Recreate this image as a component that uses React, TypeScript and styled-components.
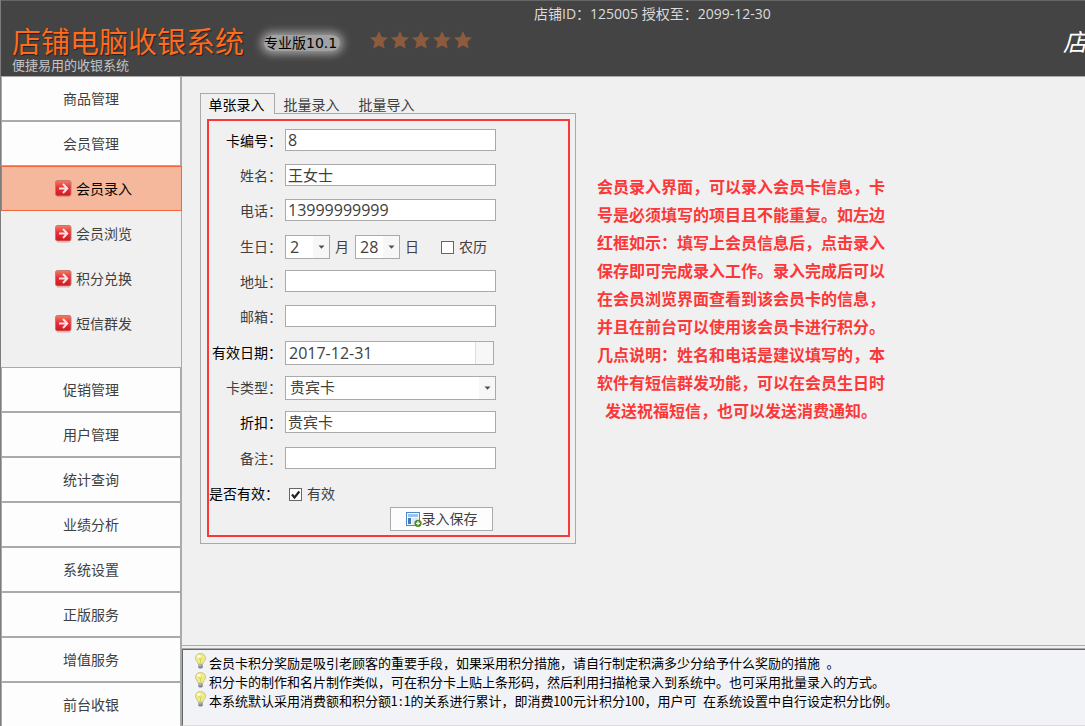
import React, { useState } from 'react';
import styled, { createGlobalStyle } from 'styled-components';

const CJK = '"Noto Sans CJK SC", sans-serif';
const MIXED = '"Open Sans", "Noto Sans CJK SC", sans-serif';

const GlobalStyle = createGlobalStyle`
  *, *::before, *::after { box-sizing: border-box; }
  body { margin: 0; background: #f0f0f0; font: 14px/20px ${CJK}; color: #404040; }
  button, input, select { font: inherit; color: inherit; margin: 0; border-radius: 0; }
`;

const Page = styled.div`
  display: flex;
  flex-direction: column;
  height: 100vh;
  overflow: hidden;
  border-left: 1px solid #7c7c7c;
`;

const Header = styled.header`
  display: flex;
  flex: none;
  align-items: flex-start;
  height: 76px;
  padding-left: 11px;
  overflow: hidden;
  background: #444;
  border-top: 1px solid #666;
  white-space: nowrap;
`;

const Brand = styled.div`
  flex: none;
  width: 252px;
  padding-top: 22px;
`;

const Title = styled.h1`
  margin: 0;
  font-size: 29px;
  font-weight: 400;
  line-height: 34px;
  color: #ff6a1c;
  text-shadow: 1px 1px 1px #222;
`;

const Slogan = styled.p`
  margin: 0;
  font-size: 13px;
  line-height: 16px;
  color: #c4c4c4;
`;

const Edition = styled.span`
  flex: none;
  width: 76px;
  margin-top: 34px;
  font: 14px/16px "DejaVu Sans", ${CJK};
  color: #000;
  background: rgba(255, 255, 255, 0.5);
  border-radius: 8px;
  box-shadow: 0 0 8px 3px rgba(255, 255, 255, 0.5);
`;

const Stars = styled.div`
  display: flex;
  flex: none;
  gap: 3px;
  margin: 30px 0 0 30px;
`;

const License = styled.p`
  flex: none;
  margin: 3px 0 0 62px;
  font-family: ${MIXED};
  color: #dcdcdc;
`;

const ShopName = styled.em`
  flex: none;
  width: 22px;
  margin: 25px 0 0 auto;
  font-size: 24px;
  line-height: 30px;
  color: #fff;
`;

const Body = styled.div`
  display: flex;
  flex: 1;
  min-height: 0;
`;

const Sidebar = styled.nav`
  flex: none;
  width: 181px;
  border-right: 1px solid #aaa;
`;

const MenuItem = styled.a`
  display: flex;
  align-items: center;
  justify-content: center;
  height: 45px;
  padding-bottom: 2px;
  border: 1px solid #aaa;
  background: #fdfdfd;
  color: #404040;
  text-decoration: none;
`;

const SubMenu = styled.div`
  padding-bottom: 21px;
`;

const SubItem = styled.a<{ $active?: boolean }>`
  display: flex;
  align-items: center;
  gap: 4px;
  height: 45px;
  margin-right: ${p => (p.$active ? '-1px' : '0')};
  padding: 0 0 1px 53px;
  border: 1px solid ${p => (p.$active ? '#f2663c' : 'transparent')};
  background: ${p => (p.$active ? '#f5b89c' : 'transparent')};
  color: ${p => (p.$active ? '#000' : '#404040')};
  text-decoration: none;
`;

const Content = styled.div`
  display: flex;
  flex: 1;
  flex-direction: column;
  min-width: 0;
  border-top: 1px solid #aaa;
`;

const Workspace = styled.main`
  display: flex;
  flex: 1;
  gap: 21px;
  align-items: flex-start;
  padding: 16px 18px 0;
`;

const TabBar = styled.div`
  display: flex;
  height: 21px;
`;

const Tab = styled.button<{ $active?: boolean }>`
  z-index: ${p => (p.$active ? 1 : 0)};
  height: 21px;
  width: 75px;
  padding: 0 2px 0 0;
  line-height: 18px;
  border: 1px solid ${p => (p.$active ? '#aaa' : 'transparent')};
  border-bottom: 0;
  background: ${p => (p.$active ? '#f0f0f0' : 'none')};
  color: ${p => (p.$active ? '#000' : '#404040')};
`;

const TabPanel = styled.div`
  margin-top: -1px;
  padding: 5px 5px 6px 6px;
  border: 1px solid #aaa;
`;

const TabSheet = styled.section`
  flex: none;
  width: 376px;
`;

const EntryForm = styled.form`
  display: flex;
  flex-direction: column;
  gap: 1px;
  padding: 8px 0 4px;
  border: 2px solid #fb3838;
`;

const Group = styled.div`
  display: flex;
  flex-direction: column;
`;

const Row = styled.div<{ $last?: boolean }>`
  display: flex;
  align-items: flex-start;
  height: ${p => (p.$last ? '25px' : '35px')};
`;

const Label = styled.label<{ $strong?: boolean; $spaced?: boolean }>`
  flex: none;
  width: 76px;
  padding-right: ${p => (p.$spaced ? '6px' : '3px')};
  line-height: 22px;
  text-align: right;
  white-space: nowrap;
  color: ${p => (p.$strong ? '#000' : '#404040')};
`;

const TextInput = styled.input<{ $numeric?: boolean }>`
  width: 211px;
  height: 22px;
  padding: ${p => (p.$numeric ? '0 2px' : '0 2px 2px')};
  border: 1px solid #aaa;
  background: #fff;
  font-family: ${MIXED};
  font-size: ${p => (p.$numeric ? '16px' : '15px')};
`;

const SelectBox = styled.span<{ $wide?: boolean }>`
  display: grid;
  width: ${p => (p.$wide ? '211px' : '45px')};
  height: 24px;

  select, svg { grid-area: 1 / 1; }
  svg { justify-self: end; align-self: center; margin-right: 5px; pointer-events: none; }
`;

const Select = styled.select<{ $numeric?: boolean }>`
  appearance: none;
  width: 100%;
  height: 24px;
  padding: ${p => (p.$numeric ? '0 0 0 4px' : '0 0 2px 4px')};
  border: 1px solid #aaa;
  background: linear-gradient(to left, #f7f7f7 16px, #fff 16px);
  font-family: ${MIXED};
  font-size: ${p => (p.$numeric ? '16px' : '15px')};
`;

const Unit = styled.span`
  width: 25px;
  padding-left: 5px;
  line-height: 22px;
`;

const CheckLabel = styled.label<{ $indent?: boolean }>`
  display: flex;
  align-items: center;
  gap: 5px;
  height: 24px;
  margin-left: ${p => (p.$indent ? '16px' : '4px')};
  line-height: 22px;
`;

const CheckText = styled.span`
  padding-bottom: 2px;
`;

const CheckBox = styled.span`
  display: grid;
  width: 13px;
  height: 13px;

  input, svg { grid-area: 1 / 1; }
  input {
    appearance: none;
    width: 13px;
    height: 13px;
    border: 1px solid #666;
    background: #fff;
  }
  svg { pointer-events: none; }
`;

const DateField = styled.div`
  display: flex;
  width: 209px;
  height: 24px;
  border: 1px solid #aaa;
  background: #fff;

  input {
    flex: 1;
    min-width: 0;
    padding: 0 3px;
    border: 0;
    background: none;
    font-family: ${MIXED};
    font-size: 16px;
  }
  button {
    width: 18px;
    padding: 0;
    border: 0;
    border-left: 1px solid #ddd;
    background: #f7f7f7;
  }
`;

const SaveButton = styled.button`
  display: flex;
  align-items: center;
  justify-content: center;
  align-self: flex-end;
  width: 103px;
  height: 24px;
  margin-right: 75px;
  padding: 0;
  line-height: 18px;
  border: 1px solid #aaa;
  background: #fdfdfd;

  span { padding-bottom: 2px; }
`;

const Guide = styled.p`
  width: 288px;
  margin: 79px 0 0;
  font-size: 16px;
  font-weight: 700;
  line-height: 28px;
  text-align: center;
  color: #fb3838;
`;

const Footer = styled.footer`
  flex: none;
  padding-top: 2px;
  border-top: 1px solid #aaa;
`;

const Tips = styled.ul`
  margin: 1px 0 0;
  padding: 3px 0 15px 11px;
  list-style: none;
  border: solid #666;
  border-width: 1px 0 0 1px;
  border-bottom: 1px solid #ddd;
  box-shadow: 0 -1px 0 #aaa;
  background: #f2f3f7;
  font-size: 13px;
  color: #000;
`;

const Tip = styled.li`
  display: flex;
  align-items: flex-start;
  gap: 2px;
  height: 19px;
  line-height: 19px;
  white-space: pre;
`;

const HalfWidth = styled.span`
  font-feature-settings: 'hwid';
`;

const Star = () => (
  <svg width="18" height="18" viewBox="0 0 18 18" aria-hidden="true">
    <path d="M9 0l2.7 5.9 6.3.6-4.7 4.3 1.4 6.6L9 14.4l-5.7 3 1.4-6.6L0 6.5l6.3-.6z" fill="#8c5b3d" />
  </svg>
);

const ArrowBadge = () => (
  <svg width="17" height="21" viewBox="0 0 17 21" aria-hidden="true">
    <defs>
      <linearGradient id="badge" x1="0" y1="0" x2="0" y2="1">
        <stop offset="0" stopColor="#f08060" />
        <stop offset="0.45" stopColor="#e8303a" />
        <stop offset="1" stopColor="#cf1822" />
      </linearGradient>
    </defs>
    <rect x="0.5" y="2.5" width="15.5" height="15.5" rx="2" fill="url(#badge)" stroke="#c8766c" />
    <path d="M2 19.5h13" stroke="#f3a8a0" strokeOpacity="0.5" />
    <path d="M4 10.5h8M8 6l4.3 4.5L8 15" fill="none" stroke="#fff" strokeOpacity="0.85" strokeWidth="2" />
  </svg>
);

const Caret = () => (
  <svg width="7" height="4" viewBox="0 0 7 4" aria-hidden="true">
    <path d="M0.5 0.5h6L3.5 3.8z" fill="#505050" />
  </svg>
);

const Tick = () => (
  <svg width="13" height="13" viewBox="0 0 13 13" aria-hidden="true">
    <path d="M3 6.5l2.5 3L10.3 3.5" fill="none" stroke="#222" strokeWidth="2.2" />
  </svg>
);

const SaveIcon = () => (
  <svg width="16" height="16" viewBox="0 0 16 16" aria-hidden="true">
    <rect x="0.5" y="1.5" width="13" height="13" fill="#f4f9ff" stroke="#4f86c6" />
    <rect x="2" y="3" width="10" height="3" fill="#9cc4ee" />
    <rect x="2" y="7" width="3" height="6" fill="#3f78c0" />
    <rect x="6" y="7" width="6" height="6" fill="#dde9f6" />
    <circle cx="12" cy="12.3" r="3.6" fill="#4c8a2c" />
    <path d="M12 10.3v4M10 12.3h4" stroke="#fff" strokeWidth="1.3" />
  </svg>
);

const Bulb = () => (
  <svg width="13" height="16" viewBox="0 0 13 16" aria-hidden="true">
    <path d="M6.5 0.5c-3 0-5 2.1-5 4.7 0 2.5 2.3 3.4 2.6 5.8h4.8c.3-2.4 2.6-3.3 2.6-5.8 0-2.6-2-4.7-5-4.7z" fill="#eeed86" stroke="#cdbb80" strokeWidth="0.9" />
    <path d="M6.5 10V6.5M4.8 5l1.7 2 1.7-2" fill="none" stroke="#c6cc48" strokeWidth="0.8" />
    <ellipse cx="4.8" cy="3.4" rx="1.8" ry="1.4" fill="#fffde0" />
    <path d="M4.3 11.5h4.4v2.8l-1 1.2H5.3l-1-1.2z" fill="#7d858c" />
    <path d="M4.5 12.8h3" stroke="#c9ced3" />
  </svg>
);

const subItems = ['会员录入', '会员浏览', '积分兑换', '短信群发'];
const lowerItems = ['促销管理', '用户管理', '统计查询', '业绩分析', '系统设置', '正版服务', '增值服务', '前台收银'];
const tabs = ['单张录入', '批量录入', '批量导入'];
const tips = [
  '会员卡积分奖励是吸引老顾客的重要手段，如果采用积分措施，请自行制定积满多少分给予什么奖励的措施 。',
  '积分卡的制作和名片制作类似，可在积分卡上贴上条形码，然后利用扫描枪录入到系统中。也可采用批量录入的方式。',
  '本系统默认采用消费额和积分额1:1的关系进行累计，即消费100元计积分100，用户可 在系统设置中自行设定积分比例。',
];

// Latin runs are set at half the width of a Chinese character.
const TipText = ({ text }: { text: string }) => (
  <span>
    {text.split(/([ -~]+)/).map((part, i) => (i % 2 ? <HalfWidth key={i}>{part}</HalfWidth> : part))}
  </span>
);

type FieldProps = { id: string; label: string; value?: string; strong?: boolean; numeric?: boolean };

const Field = ({ id, label, value = '', strong, numeric }: FieldProps) => (
  <Row>
    <Label htmlFor={id} $strong={strong}>{label}：</Label>
    <TextInput id={id} defaultValue={value} $numeric={numeric} />
  </Row>
);

type CheckProps = { id: string; text: string; initial: boolean; indent?: boolean };

const Check = ({ id, text, initial, indent }: CheckProps) => {
  const [on, setOn] = useState(initial);
  return (
    <CheckLabel $indent={indent}>
      <CheckBox>
        <input id={id} type="checkbox" checked={on} onChange={e => setOn(e.target.checked)} />
        {on && <Tick />}
      </CheckBox>
      <CheckText>{text}</CheckText>
    </CheckLabel>
  );
};

const range = (n: number) => Array.from({ length: n }, (_, i) => i + 1);

export default function App() {
  return (
    <Page>
      <GlobalStyle />
      <Header>
        <Brand>
          <Title>店铺电脑收银系统</Title>
          <Slogan>便捷易用的收银系统</Slogan>
        </Brand>
        <Edition>专业版10.1</Edition>
        <Stars>{range(5).map(n => <Star key={n} />)}</Stars>
        <License>店铺ID：125005 授权至：2099-12-30</License>
        <ShopName>店</ShopName>
      </Header>
      <Body>
        <Sidebar>
          <MenuItem href="#">商品管理</MenuItem>
          <MenuItem href="#">会员管理</MenuItem>
          <SubMenu>
            {subItems.map((item, i) => (
              <SubItem key={item} href="#" $active={i === 0}><ArrowBadge />{item}</SubItem>
            ))}
          </SubMenu>
          {lowerItems.map(item => <MenuItem key={item} href="#">{item}</MenuItem>)}
        </Sidebar>
        <Content>
          <Workspace>
            <TabSheet>
              <TabBar role="tablist">
                {tabs.map((tab, i) => (
                  <Tab key={tab} role="tab" aria-selected={i === 0} $active={i === 0}>{tab}</Tab>
                ))}
              </TabBar>
              <TabPanel role="tabpanel">
                <EntryForm onSubmit={e => e.preventDefault()}>
                  <Group>
                    <Field id="card" label="卡编号" value="8" strong numeric />
                    <Field id="name" label="姓名" value="王女士" />
                    <Field id="phone" label="电话" value="13999999999" numeric />
                  </Group>
                  <Group>
                    <Row>
                      <Label htmlFor="month">生日：</Label>
                      <SelectBox>
                        <Select id="month" defaultValue={2} $numeric>
                          {range(12).map(n => <option key={n}>{n}</option>)}
                        </Select>
                        <Caret />
                      </SelectBox>
                      <Unit>月</Unit>
                      <SelectBox>
                        <Select aria-label="日" defaultValue={28} $numeric>
                          {range(31).map(n => <option key={n}>{n}</option>)}
                        </Select>
                        <Caret />
                      </SelectBox>
                      <Unit>日</Unit>
                      <Check id="lunar" text="农历" initial={false} indent />
                    </Row>
                    <Field id="address" label="地址" />
                    <Field id="mail" label="邮箱" />
                  </Group>
                  <Group>
                    <Row>
                      <Label htmlFor="expiry" $strong>有效日期：</Label>
                      <DateField>
                        <input id="expiry" defaultValue="2017-12-31" />
                        <button type="button" aria-label="选择日期" />
                      </DateField>
                    </Row>
                    <Row>
                      <Label htmlFor="type">卡类型：</Label>
                      <SelectBox $wide>
                        <Select id="type"><option>贵宾卡</option></Select>
                        <Caret />
                      </SelectBox>
                    </Row>
                    <Field id="discount" label="折扣" value="贵宾卡" strong />
                  </Group>
                  <Group>
                    <Field id="remark" label="备注" />
                    <Row $last>
                      <Label htmlFor="valid" $strong $spaced>是否有效：</Label>
                      <Check id="valid" text="有效" initial />
                    </Row>
                    <SaveButton type="submit"><SaveIcon /><span>录入保存</span></SaveButton>
                  </Group>
                </EntryForm>
              </TabPanel>
            </TabSheet>
            <Guide>
              会员录入界面，可以录入会员卡信息，卡号是必须填写的项目且不能重复。如左边红框如示：填写上会员信息后，点击录入保存即可完成录入工作。录入完成后可以在会员浏览界面查看到该会员卡的信息，并且在前台可以使用该会员卡进行积分。几点说明：姓名和电话是建议填写的，本软件有短信群发功能，可以在会员生日时发送祝福短信，也可以发送消费通知。
            </Guide>
          </Workspace>
          <Footer>
            <Tips>
              {tips.map(tip => <Tip key={tip}><Bulb /><TipText text={tip} /></Tip>)}
            </Tips>
          </Footer>
        </Content>
      </Body>
    </Page>
  );
}
